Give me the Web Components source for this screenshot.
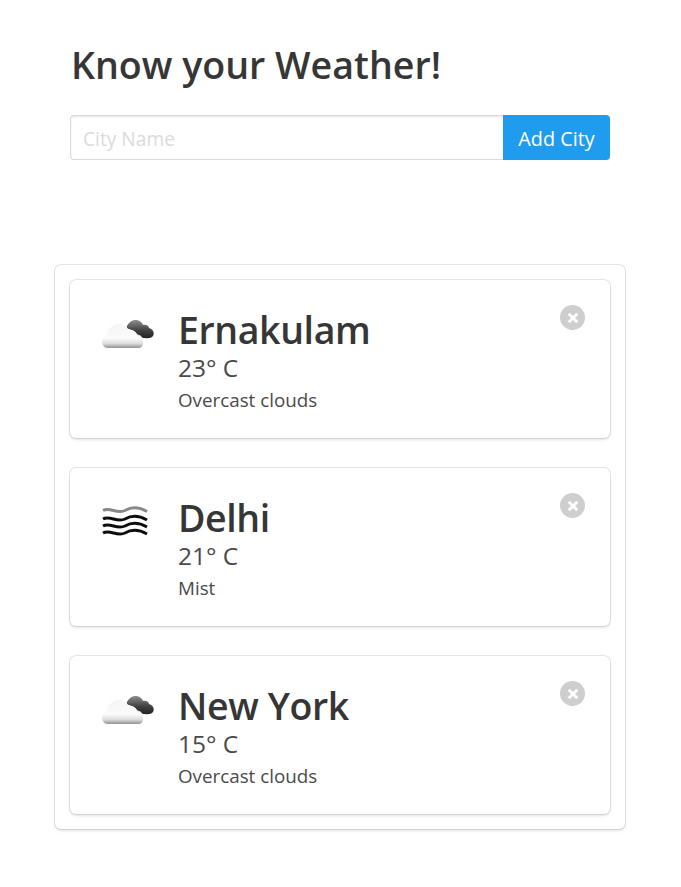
<!DOCTYPE html>
<html lang="en">
<head>
<meta charset="utf-8">
<title>Know your Weather!</title>
<style>
  html, body { margin: 0; background: #fff; }
  body { font-family: "Open Sans", "Noto Sans", sans-serif; color: #4a4a4a; }
</style>
</head>
<body>
<weather-app>
  <city-form slot="form"></city-form>
  <weather-card city="Ernakulam" temp="23° C" desc="Overcast clouds" icon="clouds"></weather-card>
  <weather-card city="Delhi" temp="21° C" desc="Mist" icon="mist"></weather-card>
  <weather-card city="New York" temp="15° C" desc="Overcast clouds" icon="clouds"></weather-card>
</weather-app>

<script>
class WeatherApp extends HTMLElement {
  constructor() {
    super();
    this.attachShadow({ mode: "open" });
  }

  connectedCallback() {
    this.shadowRoot.innerHTML = `
      <style>
        :host { display: block; padding: 44px 0 58px; }
        .list {
          box-sizing: border-box;
          width: 570px;
          margin: 105px 0 0 55px;
          padding: 15px;
          display: flex;
          flex-direction: column;
          gap: 30px;
          background: #fff;
          border-radius: 6px;
          box-shadow: 0 2px 3px rgba(10, 10, 10, 0.1), 0 0 0 1px rgba(10, 10, 10, 0.1);
        }
      </style>
      <slot name="form"></slot>
      <div class="list"><slot></slot></div>
    `;
  }
}

class CityForm extends HTMLElement {
  constructor() {
    super();
    this.attachShadow({ mode: "open" });
  }

  connectedCallback() {
    this.shadowRoot.innerHTML = `
      <style>
        :host { display: block; width: 540px; margin-left: 70px; }
        h1 {
          margin: 0 0 29px 1px;
          font-size: 37.6px;
          line-height: 1.125;
          font-weight: 600;
          color: #363636;
        }
        form { display: flex; height: 45px; }
        input {
          flex: 1;
          min-width: 0;
          box-sizing: border-box;
          padding: 2px 12px 0;
          font: inherit;
          font-size: 19.2px;
          color: #363636;
          background: #fff;
          border: 1px solid #dbdbdb;
          border-right: 0;
          border-radius: 4px 0 0 4px;
          box-shadow: inset 0 1px 2px rgba(10, 10, 10, 0.1);
          outline: 0;
        }
        input::placeholder { color: #dbdbdb; opacity: 1; }
        button {
          width: 107px;
          padding: 2px 0 0;
          font: inherit;
          font-size: 19.8px;
          color: #fff;
          background: #209cee;
          border: 0;
          border-radius: 0 4px 4px 0;
        }
      </style>
      <h1>Know your Weather!</h1>
      <form>
        <input type="text" placeholder="City Name">
        <button type="button">Add City</button>
      </form>
    `;
  }
}

class WeatherIcon extends HTMLElement {
  constructor() {
    super();
    this.attachShadow({ mode: "open" });
  }

  wave(y) {
    return `M13 ${y}C20 ${y - 4} 27 ${y + 4} 35 ${y}C42 ${y - 4} 50 ${y - 3} 57 ${y + 1}`;
  }

  connectedCallback() {
    const clouds = `
      <path d="M36 24C37 19 41 15 45 15C49 15 52 17 53 20C56 19 59 21 59 23C63 24 65 28 63 31C61 34 56 33 52 33C49 33 46 30 44 28C42 25 39 23 36 24Z" fill="url(#dark)"/>
      <path d="M18 43.5C11 43.5 9 33 16 31C17 24 23 18 29 18.5C34 19 37 22 38.5 26C42 24 46 27 47 30C51 30 54 34 53.5 38C53 42 51 43.5 48 43.5Z" fill="url(#white)" stroke="#fff" stroke-width="1"/>
    `;
    const mist = `
      <path d="${this.wave(17.5)}" stroke="#888" stroke-width="3" fill="none"/>
      <path d="${this.wave(26)}" stroke="#111" stroke-width="3" fill="none"/>
      <path d="${this.wave(33)}" stroke="#111" stroke-width="3" fill="none"/>
      <path d="${this.wave(40)}" stroke="#111" stroke-width="3" fill="none"/>
    `;
    this.shadowRoot.innerHTML = `
      <style>
        :host { display: block; flex: none; width: 80px; height: 60px; margin-top: 5px; }
        svg { display: block; }
      </style>
      <svg width="80" height="60" viewBox="0 0 80 60">
        <defs>
          <linearGradient id="white" x1="0" y1="0" x2="0" y2="1">
            <stop offset="0" stop-color="#f4f4f4"/>
            <stop offset="0.6" stop-color="#fbfbfb"/>
            <stop offset="0.8" stop-color="#dcdcdc"/>
            <stop offset="1" stop-color="#8a8a8a"/>
          </linearGradient>
          <linearGradient id="dark" x1="0" y1="0" x2="0" y2="1">
            <stop offset="0" stop-color="#8f8f8f"/>
            <stop offset="0.55" stop-color="#444"/>
            <stop offset="1" stop-color="#222"/>
          </linearGradient>
          <filter id="soft"><feGaussianBlur stdDeviation="0.5"/></filter>
        </defs>
        <g filter="url(#soft)">${this.getAttribute("icon") === "mist" ? mist : clouds}</g>
      </svg>
    `;
  }
}

class WeatherCard extends HTMLElement {
  constructor() {
    super();
    this.attachShadow({ mode: "open" });
  }

  connectedCallback() {
    this.shadowRoot.innerHTML = `
      <style>
        :host {
          display: flex;
          gap: 8px;
          box-sizing: border-box;
          height: 158px;
          padding: 20px;
          position: relative;
          background: #fff;
          border-radius: 6px;
          box-shadow: 0 2px 3px rgba(10, 10, 10, 0.1), 0 0 0 1px rgba(10, 10, 10, 0.1);
        }
        .text { flex: 1; padding-top: 7px; }
        h2 {
          margin: 0 0 1px;
          font-size: 37.5px;
          letter-spacing: -0.4px;
          line-height: 45px;
          font-weight: 600;
          color: #363636;
        }
        .temp { font-size: 24.5px; line-height: 30px; }
        .desc { font-size: 18.8px; line-height: 34px; }
        button {
          position: absolute;
          top: 25px;
          right: 25px;
          width: 25px;
          height: 25px;
          padding: 0;
          border: 0;
          border-radius: 50%;
          background: rgba(10, 10, 10, 0.2);
        }
        button::before, button::after {
          content: "";
          position: absolute;
          top: 50%;
          left: 50%;
          background: #fff;
          transform: translate(-50%, -50%) rotate(45deg);
        }
        button::before { width: 12px; height: 3px; }
        button::after { width: 3px; height: 12px; }
      </style>
      <weather-icon icon="${this.getAttribute("icon")}"></weather-icon>
      <div class="text">
        <h2>${this.getAttribute("city")}</h2>
        <div class="temp">${this.getAttribute("temp")}</div>
        <div class="desc">${this.getAttribute("desc")}</div>
      </div>
      <button type="button" aria-label="Remove city"></button>
    `;
  }
}

customElements.define("weather-app", WeatherApp);
customElements.define("city-form", CityForm);
customElements.define("weather-icon", WeatherIcon);
customElements.define("weather-card", WeatherCard);
</script>
</body>
</html>
